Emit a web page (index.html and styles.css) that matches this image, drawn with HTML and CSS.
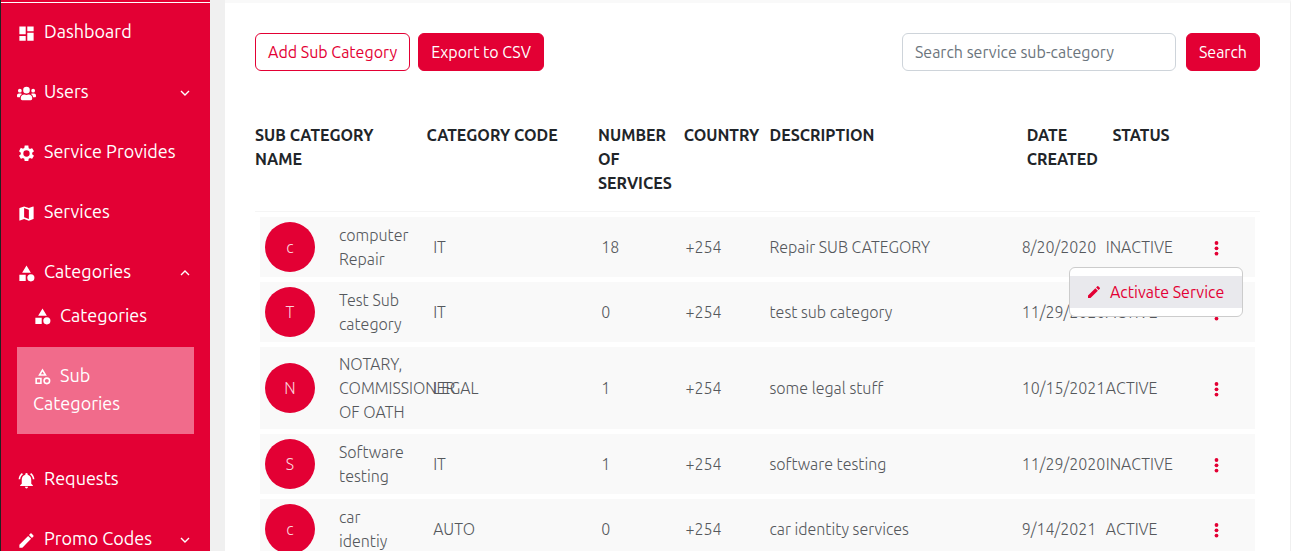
FILE: index.html
```html
<!DOCTYPE html>
<html lang="en">
<head>
<meta charset="utf-8">
<meta name="viewport" content="width=device-width, initial-scale=1">
<title>Sub Categories</title>
<link rel="stylesheet" href="styles.css">
</head>
<body>
<svg class="sprite" aria-hidden="true">
  <symbol id="dashboard" viewBox="0 0 24 24"><path d="M3 13h8V3H3v10zm0 8h8v-6H3v6zm10 0h8V11h-8v10zm0-18v6h8V3h-8z"/></symbol>
  <symbol id="users" viewBox="0 0 640 512"><path d="M96 224a64 64 0 1 0 0-128 64 64 0 0 0 0 128zm448 0a64 64 0 1 0 0-128 64 64 0 0 0 0 128zm32 32h-64c-17.600 0-33.500 7.100-45.100 18.600 40.300 22.100 68.900 62 75.100 109.400h66c17.700 0 32-14.300 32-32v-32c0-35.300-28.700-64-64-64zm-256 0a112 112 0 1 0 0-224 112 112 0 0 0 0 224zm76.800 32h-8.300c-20.800 10-43.900 16-68.500 16s-47.600-6-68.500-16h-8.300C179.600 288 128 339.600 128 403.200V432c0 26.500 21.500 48 48 48h288c26.500 0 48-21.500 48-48v-28.800c0-63.600-51.600-115.200-115.200-115.200zm-223.700-13.400C161.500 263.100 145.600 256 128 256H64c-35.300 0-64 28.700-64 64v32c0 17.700 14.300 32 32 32h65.900c6.300-47.400 34.900-87.300 75.200-109.400z"/></symbol>
  <symbol id="gear" viewBox="0 0 24 24"><path d="M19.140 12.940c.04-.3.06-.61.06-.94 0-.32-.02-.64-.07-.94l2.030-1.580a.49.490 0 0 0 .12-.61l-1.920-3.320a.49.490 0 0 0-.59-.22l-2.390.96c-.5-.38-1.030-.7-1.620-.94l-.36-2.540A.48.480 0 0 0 13.920 2h-3.840c-.24 0-.43.17-.47.41l-.36 2.540c-.59.24-1.130.57-1.620.94l-2.390-.96a.48.480 0 0 0-.59.22L2.740 8.870a.47.470 0 0 0 .12.61l2.030 1.580c-.05.3-.09.63-.09.94s.02.64.07.94l-2.030 1.580a.49.490 0 0 0-.12.61l1.920 3.320c.12.22.37.29.59.22l2.390-.96c.5.38 1.030.7 1.620.94l.36 2.540c.05.24.24.41.48.41h3.840c.24 0 .44-.17.47-.41l.36-2.540c.59-.24 1.130-.56 1.620-.94l2.390.96c.22.08.47 0 .59-.22l1.920-3.320a.47.470 0 0 0-.12-.61zM12 16a4 4 0 1 1 0-8 4 4 0 0 1 0 8z"/></symbol>
  <symbol id="map" viewBox="0 0 24 24"><path d="M20.500 3l-.16.03L15 5.100 9 3 3.360 4.900a.5.500 0 0 0-.36.480V20.500c0 .28.22.5.5.5l.16-.03L9 18.900l6 2.100 5.640-1.900a.5.500 0 0 0 .36-.48V3.500a.5.500 0 0 0-.5-.5zM15 19l-6-2.110V5l6 2.110V19z"/></symbol>
  <symbol id="shapes" viewBox="0 0 24 24"><path d="M12 2l-5.500 9h11zM3 13.500h8v8H3z"/><circle cx="17.500" cy="17.500" r="4.500"/></symbol>
  <symbol id="shapes-outline" viewBox="0 0 24 24"><path fill-rule="evenodd" d="M12 2l-5.500 9h11L12 2zm0 3.840L13.930 9h-3.870L12 5.840zM3 21.500h8v-8H3v8zm2-6h4v4H5v-4zM17.500 13a4.500 4.500 0 1 0 0 9 4.500 4.500 0 0 0 0-9zm0 7a2.500 2.500 0 1 1 0-5 2.500 2.500 0 0 1 0 5z"/></symbol>
  <symbol id="bell" viewBox="0 0 24 24"><path d="M7.580 4.080L6.150 2.650C3.750 4.480 2.170 7.300 2.030 10.500h2c.15-2.650 1.510-4.970 3.550-6.420zm12.390 6.420h2c-.15-3.200-1.730-6.020-4.120-7.850l-1.420 1.430c2.020 1.450 3.390 3.770 3.540 6.420zM18 11c0-3.070-1.640-5.640-4.500-6.320V4a1.500 1.500 0 0 0-3 0v.68C7.630 5.360 6 7.920 6 11v5l-2 2v1h16v-1l-2-2v-5zm-6 11c1.100 0 2-.9 2-2h-4c0 1.100.9 2 2 2z"/></symbol>
  <symbol id="pencil" viewBox="0 0 24 24"><path d="M3 17.250V21h3.750L17.810 9.940l-3.750-3.750L3 17.250zM20.710 7.040a1 1 0 0 0 0-1.410l-2.340-2.340a1 1 0 0 0-1.410 0l-1.830 1.830 3.750 3.750 1.830-1.830z"/></symbol>
  <symbol id="chevron" viewBox="0 0 12 12"><path d="M2 4l4 4 4-4" fill="none" stroke="currentColor" stroke-width="1.400"/></symbol>
  <symbol id="dots" viewBox="0 0 20 20"><circle cx="10.500" cy="6" r="1.900"/><circle cx="10.500" cy="11.300" r="1.900"/><circle cx="10.500" cy="16.600" r="1.900"/></symbol>
</svg>
<div class="app">
  <nav class="sidebar" aria-label="Main">
    <a class="nav-item" href="#"><svg class="icon"><use href="#dashboard"/></svg><span>Dashboard</span></a>
    <button class="nav-item" type="button"><svg class="icon"><use href="#users"/></svg><span>Users</span><svg class="chevron"><use href="#chevron"/></svg></button>
    <a class="nav-item" href="#"><svg class="icon"><use href="#gear"/></svg><span>Service Provides</span></a>
    <a class="nav-item" href="#"><svg class="icon"><use href="#map"/></svg><span>Services</span></a>
    <button class="nav-item" type="button" aria-expanded="true"><svg class="icon"><use href="#shapes"/></svg><span>Categories</span><svg class="chevron chevron-up"><use href="#chevron"/></svg></button>
    <div class="subnav">
      <a class="sub-item" href="#"><svg class="icon"><use href="#shapes"/></svg>Categories</a>
      <a class="sub-item active" href="#" aria-current="page"><svg class="icon"><use href="#shapes-outline"/></svg>Sub Categories</a>
    </div>
    <a class="nav-item" href="#"><svg class="icon"><use href="#bell"/></svg><span>Requests</span></a>
    <button class="nav-item" type="button"><svg class="icon"><use href="#pencil"/></svg><span>Promo Codes</span><svg class="chevron"><use href="#chevron"/></svg></button>
  </nav>
  <main class="card">
    <div class="toolbar">
      <button class="btn btn-outline" type="button">Add Sub Category</button>
      <button class="btn" type="button">Export to CSV</button>
      <form class="search">
        <input class="search-input" type="text" placeholder="Search service sub-category" aria-label="Search service sub-category">
        <button class="btn" type="button">Search</button>
      </form>
    </div>
    <table class="table">
      <thead>
        <tr class="head-row">
          <th class="span-2">SUB CATEGORY NAME</th>
          <th class="span-2">CATEGORY CODE</th>
          <th>NUMBER OF SERVICES</th>
          <th>COUNTRY</th>
          <th class="span-3">DESCRIPTION</th>
          <th>DATE CREATED</th>
          <th>STATUS</th>
        </tr>
      </thead>
      <tbody>
        <tr class="row">
          <td class="span-2 name"><span class="avatar">c</span><span class="name-text">computer Repair</span></td>
          <td class="span-2">IT</td><td>18</td><td>+254</td><td class="span-3">Repair SUB CATEGORY</td><td>8/20/2020</td><td>INACTIVE</td>
          <td class="actions">
            <button class="more" type="button" aria-label="Actions" aria-expanded="true"><svg class="dots"><use href="#dots"/></svg></button>
            <div class="menu"><button class="menu-item" type="button"><svg class="menu-icon"><use href="#pencil"/></svg>Activate Service</button></div>
          </td>
        </tr>
        <tr class="row">
          <td class="span-2 name"><span class="avatar">T</span><span class="name-text">Test Sub category</span></td>
          <td class="span-2">IT</td><td>0</td><td>+254</td><td class="span-3">test sub category</td><td>11/29/2020</td><td>ACTIVE</td>
          <td class="actions"><button class="more" type="button" aria-label="Actions"><svg class="dots"><use href="#dots"/></svg></button></td>
        </tr>
        <tr class="row">
          <td class="span-2 name"><span class="avatar">N</span><span class="name-text">NOTARY, COMMISSIONER OF OATH</span></td>
          <td class="span-2">LEGAL</td><td>1</td><td>+254</td><td class="span-3">some legal stuff</td><td>10/15/2021</td><td>ACTIVE</td>
          <td class="actions"><button class="more" type="button" aria-label="Actions"><svg class="dots"><use href="#dots"/></svg></button></td>
        </tr>
        <tr class="row">
          <td class="span-2 name"><span class="avatar">S</span><span class="name-text">Software testing</span></td>
          <td class="span-2">IT</td><td>1</td><td>+254</td><td class="span-3">software testing</td><td>11/29/2020</td><td>INACTIVE</td>
          <td class="actions"><button class="more" type="button" aria-label="Actions"><svg class="dots"><use href="#dots"/></svg></button></td>
        </tr>
        <tr class="row">
          <td class="span-2 name"><span class="avatar">c</span><span class="name-text">car identiy</span></td>
          <td class="span-2">AUTO</td><td>0</td><td>+254</td><td class="span-3">car identity services</td><td>9/14/2021</td><td>ACTIVE</td>
          <td class="actions"><button class="more" type="button" aria-label="Actions"><svg class="dots"><use href="#dots"/></svg></button></td>
        </tr>
      </tbody>
    </table>
  </main>
</div>
</body>
</html>
```
FILE: styles.css
```css
:root {
  --red: #e30034;
  --ink: #212529;
}

* {
  box-sizing: border-box;
}

body {
  margin: 0;
  background: #f0f0f0;
  color: var(--ink);
  font: 400 16px/24px Ubuntu, "Noto Sans", sans-serif;
}

button,
input {
  font: inherit;
}

.sprite {
  position: absolute;
  width: 0;
  height: 0;
}

.app {
  display: flex;
  gap: 15px;
  height: 100vh;
  overflow: hidden;
  border-left: 1px solid #222;
}

/* Sidebar */
.sidebar {
  flex: 0 0 209px;
  padding: 1px 16px 0;
  background: linear-gradient(var(--red) 2px, #fff 2px, #fff 3px, var(--red) 3px);
  font-size: 18px;
  line-height: 28px;
}

.nav-item {
  display: flex;
  align-items: center;
  width: 100%;
  padding: 16px 0;
  border: 0;
  background: none;
  color: #fff;
  text-align: left;
  text-decoration: none;
}

.icon {
  width: 19px;
  height: 19px;
  margin: 4px 8px 0 0;
  fill: currentColor;
  flex: none;
}

.chevron {
  width: 12px;
  height: 12px;
  margin: 4px 3px 0 auto;
}

.chevron-up {
  transform: rotate(180deg);
}

.subnav {
  margin-bottom: 14px;
}

.sub-item {
  display: block;
  padding: 0 16px 18px;
  color: #fff;
  text-decoration: none;
}

.sub-item .icon {
  vertical-align: -4px;
}

.sub-item.active {
  padding: 14px 32px 17px 16px;
  background: #f16b8b;
}

/* Content */
.card {
  flex: 1;
  min-width: 0;
  padding: 30px;
  border-top: 3px solid #f9f9f9;
  border-right: 1px solid #f0f0f0;
  background: #fff;
}

.toolbar {
  display: flex;
  gap: 8px;
  margin-bottom: 52px;
}

.btn {
  padding: 6px 12px;
  border: 1px solid var(--red);
  border-radius: 6px;
  background: var(--red);
  color: #fff;
}

.btn-outline {
  background: #fff;
  color: var(--red);
}

.search {
  display: flex;
  gap: 10px;
  margin-left: auto;
}

.search-input {
  width: 274px;
  padding: 6px 12px;
  border: 1px solid #ced4da;
  border-radius: 6px;
}

.search-input::placeholder {
  color: #6c757d;
}

/* Table */
.table,
.table thead,
.table tbody {
  display: block;
}

.head-row,
.row {
  display: grid;
  grid-template-columns: repeat(12, minmax(0, 1fr));
  column-gap: 24px;
}

.head-row {
  padding-bottom: 16px;
  border-bottom: 1px solid #f5f5f5;
}

.row {
  align-items: center;
  margin: 5px;
  padding: 5px;
  background: #f9f9f9;
  color: #55585c;
  font-weight: 300;
}

th,
td {
  padding: 0;
  text-align: left;
  font-weight: inherit;
}

th {
  font-weight: 700;
}

.span-2 {
  grid-column: span 2;
}

.span-3 {
  grid-column: span 3;
}

.name {
  display: flex;
  align-items: center;
  gap: 24px;
}

.name-text {
  flex: 1;
  min-width: 0;
}

.avatar {
  flex: none;
  width: 50px;
  border-radius: 50%;
  background: var(--red);
  color: #fbd0d9;
  line-height: 50px;
  text-align: center;
}

.actions {
  position: relative;
  padding-left: 16px;
}

.more {
  display: block;
  padding: 0;
  border: 0;
  background: none;
}

.dots {
  display: block;
  width: 20px;
  height: 20px;
  fill: var(--red);
}

.menu {
  position: absolute;
  z-index: 1;
  top: 30px;
  right: 7px;
  min-width: 174px;
  padding: 8px 0;
  border: 1px solid #ccc;
  border-radius: 6px;
  background: #fff;
}

.menu-item {
  display: flex;
  align-items: center;
  gap: 8px;
  width: 100%;
  padding: 4px 16px;
  border: 0;
  background: #e9e9ed;
  color: var(--red);
  font-weight: 400;
  white-space: nowrap;
}

.menu-icon {
  width: 16px;
  height: 16px;
  fill: currentColor;
}
```
